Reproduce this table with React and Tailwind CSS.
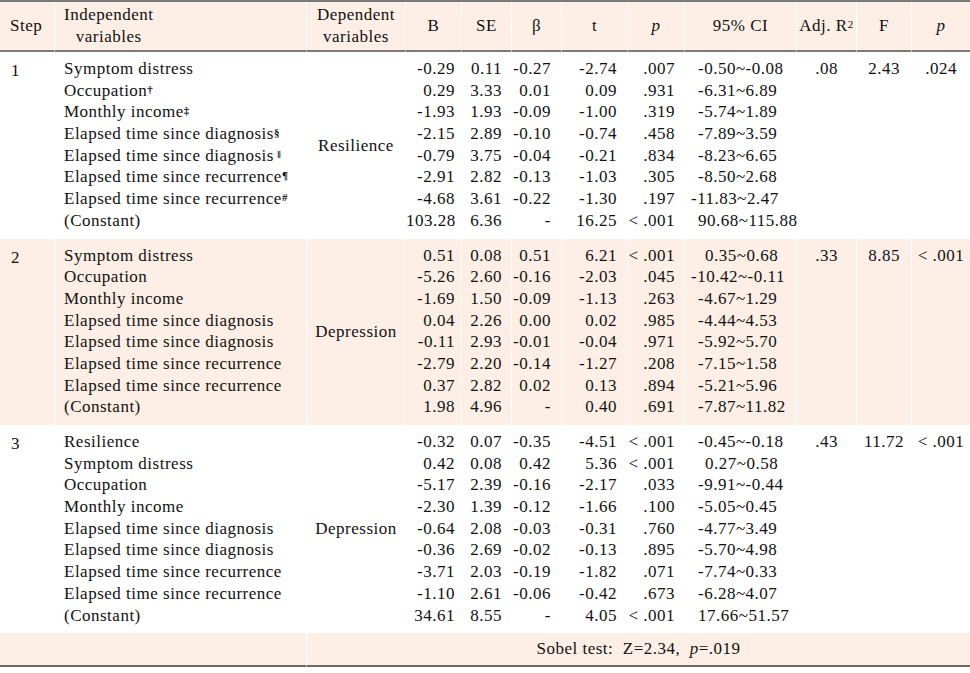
import React from "react";

const FONT = { fontFamily: '"Liberation Serif", "Times New Roman", serif' };

const s1 = [
  ["Symptom distress", "", "-0.29", "0.11", "-0.27", "-2.74", ".007", "-0.50~-0.08"],
  ["Occupation", "†", "0.29", "3.33", "0.01", "0.09", ".931", "-6.31~6.89"],
  ["Monthly income", "‡", "-1.93", "1.93", "-0.09", "-1.00", ".319", "-5.74~1.89"],
  ["Elapsed time since diagnosis", "§", "-2.15", "2.89", "-0.10", "-0.74", ".458", "-7.89~3.59"],
  ["Elapsed time since diagnosis", " ‖", "-0.79", "3.75", "-0.04", "-0.21", ".834", "-8.23~6.65"],
  ["Elapsed time since recurrence", "¶", "-2.91", "2.82", "-0.13", "-1.03", ".305", "-8.50~2.68"],
  ["Elapsed time since recurrence", "#", "-4.68", "3.61", "-0.22", "-1.30", ".197", "-11.83~2.47"],
  ["(Constant)", "", "103.28", "6.36", "-", "16.25", "< .001", "90.68~115.88"],
];
const s2 = [
  ["Symptom distress", "", "0.51", "0.08", "0.51", "6.21", "< .001", "0.35~0.68"],
  ["Occupation", "", "-5.26", "2.60", "-0.16", "-2.03", ".045", "-10.42~-0.11"],
  ["Monthly income", "", "-1.69", "1.50", "-0.09", "-1.13", ".263", "-4.67~1.29"],
  ["Elapsed time since diagnosis", "", "0.04", "2.26", "0.00", "0.02", ".985", "-4.44~4.53"],
  ["Elapsed time since diagnosis", "", "-0.11", "2.93", "-0.01", "-0.04", ".971", "-5.92~5.70"],
  ["Elapsed time since recurrence", "", "-2.79", "2.20", "-0.14", "-1.27", ".208", "-7.15~1.58"],
  ["Elapsed time since recurrence", "", "0.37", "2.82", "0.02", "0.13", ".894", "-5.21~5.96"],
  ["(Constant)", "", "1.98", "4.96", "-", "0.40", ".691", "-7.87~11.82"],
];
const s3 = [
  ["Resilience", "", "-0.32", "0.07", "-0.35", "-4.51", "< .001", "-0.45~-0.18"],
  ["Symptom distress", "", "0.42", "0.08", "0.42", "5.36", "< .001", "0.27~0.58"],
  ["Occupation", "", "-5.17", "2.39", "-0.16", "-2.17", ".033", "-9.91~-0.44"],
  ["Monthly income", "", "-2.30", "1.39", "-0.12", "-1.66", ".100", "-5.05~0.45"],
  ["Elapsed time since diagnosis", "", "-0.64", "2.08", "-0.03", "-0.31", ".760", "-4.77~3.49"],
  ["Elapsed time since diagnosis", "", "-0.36", "2.69", "-0.02", "-0.13", ".895", "-5.70~4.98"],
  ["Elapsed time since recurrence", "", "-3.71", "2.03", "-0.19", "-1.82", ".071", "-7.74~0.33"],
  ["Elapsed time since recurrence", "", "-1.10", "2.61", "-0.06", "-0.42", ".673", "-6.28~4.07"],
  ["(Constant)", "", "34.61", "8.55", "-", "4.05", "< .001", "17.66~51.57"],
];

function ciClass(v) {
  if (/^-1\d/.test(v)) return "pl-[6px]";
  if (/^\d\./.test(v)) return "pl-[20px]";
  return "pl-[13px]";
}

function Lines({ items, render }) {
  return (
    <div className="flex flex-col">
      {items.map((r, i) => (
        <div key={i} className="h-[21.7px] leading-[21.7px] whitespace-nowrap">
          {render(r)}
        </div>
      ))}
    </div>
  );
}

function Section({ step, rows, dep, adj, f, p, shaded }) {
  const bg = shaded ? "bg-[#fdefe5]" : "bg-white";
  const td = `${bg} border-r border-r-white align-top pt-[6px] pb-[7px]`;
  return (
    <tr>
      <td className={`${td} pl-[11px]`}>{step}</td>
      <td className={`${td} pl-[9px]`}>
        <Lines
          items={rows}
          render={(r) => (
            <>
              {r[0]}
              {r[1] && (
                <sup className="text-[11px] font-bold relative top-[-3px] whitespace-pre">{r[1]}</sup>
              )}
            </>
          )}
        />
      </td>
      <td className={`${bg} border-r border-r-white align-middle text-center`}>{dep}</td>
      <td className={`${td} text-right pr-[6px]`}>
        <Lines items={rows} render={(r) => r[2]} />
      </td>
      <td className={`${td} text-right pr-[9px]`}>
        <Lines items={rows} render={(r) => r[3]} />
      </td>
      <td className={`${td} text-right pr-[10px]`}>
        <Lines items={rows} render={(r) => r[4]} />
      </td>
      <td className={`${td} text-right pr-[10px]`}>
        <Lines items={rows} render={(r) => r[5]} />
      </td>
      <td className={`${td} text-right pr-[9px]`}>
        <Lines items={rows} render={(r) => r[6]} />
      </td>
      <td className={`${td} text-left`}>
        <Lines items={rows} render={(r) => <span className={`inline-block ${ciClass(r[7])}`}>{r[7]}</span>} />
      </td>
      <td className={`${td} text-center`}>
        <div className="h-[21.7px] leading-[21.7px]">{adj}</div>
      </td>
      <td className={`${td} text-center`}>
        <div className="h-[21.7px] leading-[21.7px]">{f}</div>
      </td>
      <td className={`${bg} align-top pt-[6px] pb-[7px] text-center`}>
        <div className="h-[21.7px] leading-[21.7px]">{p}</div>
      </td>
    </tr>
  );
}

export default function App() {
  const th = "bg-[#fdefe5] border-r border-r-white border-b-2 border-b-[#7a7a7a] font-normal align-middle h-[50px] leading-[22px]";
  return (
    <div className="w-[970px] h-[673px] overflow-hidden bg-white text-[#111111] text-[17px] tracking-[0.5px]" style={FONT}>
      <table className="w-[970px] table-fixed border-separate border-spacing-0 border-t-2 border-t-[#7a7a7a]">
        <colgroup>
          <col className="w-[55px]" />
          <col className="w-[252px]" />
          <col className="w-[99px]" />
          <col className="w-[56px]" />
          <col className="w-[50px]" />
          <col className="w-[50px]" />
          <col className="w-[66px]" />
          <col className="w-[57px]" />
          <col className="w-[112px]" />
          <col className="w-[60px]" />
          <col className="w-[55px]" />
          <col className="w-[58px]" />
        </colgroup>
        <thead>
          <tr>
            <th className={`${th} text-left pl-[10px]`}>Step</th>
            <th className={`${th} text-left pl-[9px]`}>
              <span className="inline-block text-center">
                Independent
                <br />
                variables
              </span>
            </th>
            <th className={`${th} text-center`}>
              Dependent
              <br />
              variables
            </th>
            <th className={`${th} text-center`}>B</th>
            <th className={`${th} text-center`}>SE</th>
            <th className={`${th} text-center`}>β</th>
            <th className={`${th} text-center`}>t</th>
            <th className={`${th} text-center italic`}>p</th>
            <th className={`${th} text-center`}>95% CI</th>
            <th className={`${th} text-center`}>
              Adj. R<sup className="text-[11px] relative top-[-3px]">2</sup>
            </th>
            <th className={`${th} text-center`}>F</th>
            <th className={`${th} text-center italic border-r-0`}>p</th>
          </tr>
        </thead>
        <tbody>
          <Section step="1" rows={s1} dep="Resilience" adj=".08" f="2.43" p=".024" shaded={false} />
          <Section step="2" rows={s2} dep="Depression" adj=".33" f="8.85" p="< .001" shaded={true} />
          <Section step="3" rows={s3} dep="Depression" adj=".43" f="11.72" p="< .001" shaded={false} />
          <tr>
            <td colSpan={2} className="bg-[#fdefe5] border-r border-r-white border-b-2 border-b-[#6a6a6a] h-[34px]"></td>
            <td colSpan={10} className="bg-[#fdefe5] border-b-2 border-b-[#6a6a6a] text-center h-[34px] whitespace-pre">
              {"Sobel test:  Z=2.34,  "}
              <span className="italic">p</span>
              {"=.019"}
            </td>
          </tr>
        </tbody>
      </table>
    </div>
  );
}
